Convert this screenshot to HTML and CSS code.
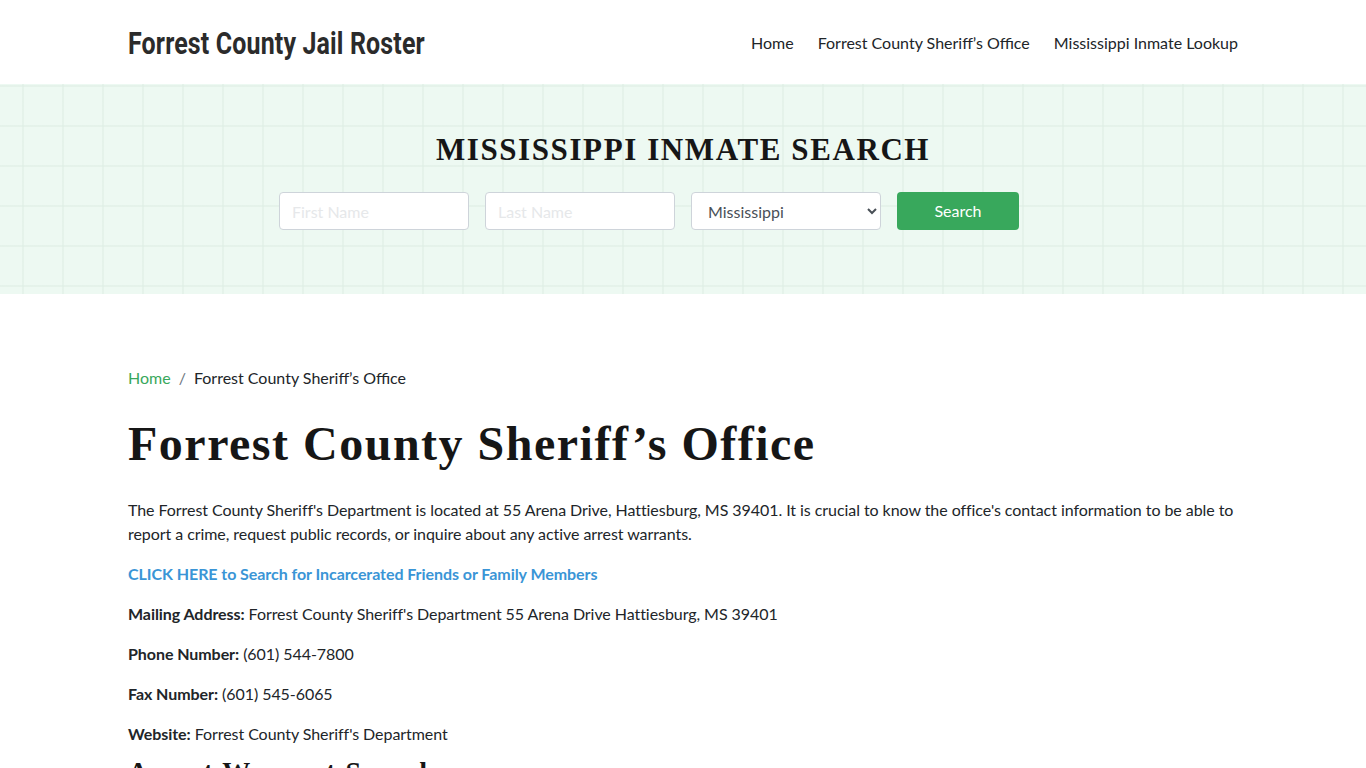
FILE: index.html
```html
<!DOCTYPE html>
<html lang="en">
<head>
<meta charset="utf-8">
<title>Forrest County Sheriff’s Office</title>
<link rel="stylesheet" href="styles.css">
</head>
<body>
<header class="site-header">
  <div class="container header-inner">
    <a class="logo" href="#">Forrest County Jail Roster</a>
    <nav class="main-nav">
      <a href="#">Home</a>
      <a href="#">Forrest County Sheriff’s Office</a>
      <a href="#">Mississippi Inmate Lookup</a>
    </nav>
  </div>
</header>
<section class="hero">
  <h2 class="hero-title">MISSISSIPPI INMATE SEARCH</h2>
  <form class="search-form">
    <input type="text" placeholder="First Name">
    <input type="text" placeholder="Last Name">
    <select><option>Mississippi</option></select>
    <button type="button">Search</button>
  </form>
</section>
<main class="container content">
  <div class="breadcrumb"><a href="#">Home</a><span class="sep">/</span><span>Forrest County Sheriff’s Office</span></div>
  <h1>Forrest County Sheriff’s Office</h1>
  <p>The Forrest County Sheriff's Department is located at 55 Arena Drive, Hattiesburg, MS 39401. It is crucial to know the office's contact information to be able to report a crime, request public records, or inquire about any active arrest warrants.</p>
  <p><a class="cta" href="#">CLICK HERE to Search for Incarcerated Friends or Family Members</a></p>
  <p><strong>Mailing Address:</strong> Forrest County Sheriff's Department 55 Arena Drive Hattiesburg, MS 39401</p>
  <p><strong>Phone Number:</strong> (601) 544-7800</p>
  <p><strong>Fax Number:</strong> (601) 545-6065</p>
  <p><strong>Website:</strong> Forrest County Sheriff's Department</p>
  <h2 class="sub">Arrest Warrant Search</h2>
</main>
</body>
</html>
```
FILE: styles.css
```css
* { box-sizing: border-box; }
body {
  margin: 0;
  font-family: Lato, "Open Sans", sans-serif;
  color: #212529;
  background: #fff;
}
a { text-decoration: none; }
.container {
  width: 1110px;
  margin: 0 auto;
}
.site-header { height: 84px; background: #fff; }
.header-inner {
  height: 84px;
  display: flex;
  align-items: center;
  justify-content: space-between;
}
.logo {
  font-family: "Roboto", sans-serif;
  font-weight: 700;
  font-size: 32px;
  color: #2b2b2b;
  transform: scaleX(0.78);
  transform-origin: left center;
  display: inline-block;
  white-space: nowrap;
  letter-spacing: 0.2px;
  margin-top: 2px;
}
.main-nav { display: flex; gap: 24px; }
.main-nav a { color: #212529; font-size: 16px; }
.hero {
  height: 210px;
  background-color: #edf9f2;
  background-image:
    linear-gradient(to right, rgba(222,238,228,0.55) 2px, transparent 2px),
    linear-gradient(to bottom, rgba(222,238,228,0.55) 2px, transparent 2px);
  background-size: 40px 40px;
  background-position: 22px 1px;
  display: flex;
  flex-direction: column;
  align-items: center;
  padding-top: 48px;
}
.hero-title {
  margin: 0;
  font-family: "Liberation Serif", serif;
  font-weight: 700;
  font-size: 31px;
  letter-spacing: 1.6px;
  color: #161616;
  line-height: 36px;
}
.search-form {
  display: flex;
  gap: 16px;
  margin-top: 24px;
  margin-right: 68px;
}
.search-form input, .search-form select {
  width: 190px;
  height: 38px;
  border: 1px solid #ced4da;
  border-radius: 4px;
  background: #fff;
  font-family: Lato, sans-serif;
  font-size: 16px;
  padding: 0 12px;
  color: #495057;
}
.search-form input::placeholder { color: #e6e8ea; }
.search-form button {
  width: 122px;
  height: 38px;
  border: none;
  border-radius: 4px;
  background: #38a85c;
  color: #fff;
  font-family: Lato, sans-serif;
  font-size: 16px;
  padding-bottom: 2px;
}
.content { padding-top: 74px; }
.breadcrumb { font-size: 16px; line-height: 20px; }
.breadcrumb a { color: #38a85c; }
.breadcrumb .sep { padding: 0 8px; color: #6c757d; }
h1 {
  font-family: "Liberation Serif", serif;
  font-weight: 700;
  font-size: 48px;
  letter-spacing: 1.5px;
  color: #161616;
  margin: 28px 0 26px;
  line-height: 56px;
}
p {
  font-size: 16px;
  line-height: 24px;
  margin: 0 0 16px;
  letter-spacing: -0.06px;
}
strong { font-weight: 700; }
.cta { color: #3a95d6; font-weight: 700; }
.sub {
  font-family: "Liberation Serif", serif;
  font-weight: 700;
  font-size: 28px;
  letter-spacing: 1.5px;
  line-height: 20px;
  margin: 16px 0 10px;
  color: #161616;
}
```
